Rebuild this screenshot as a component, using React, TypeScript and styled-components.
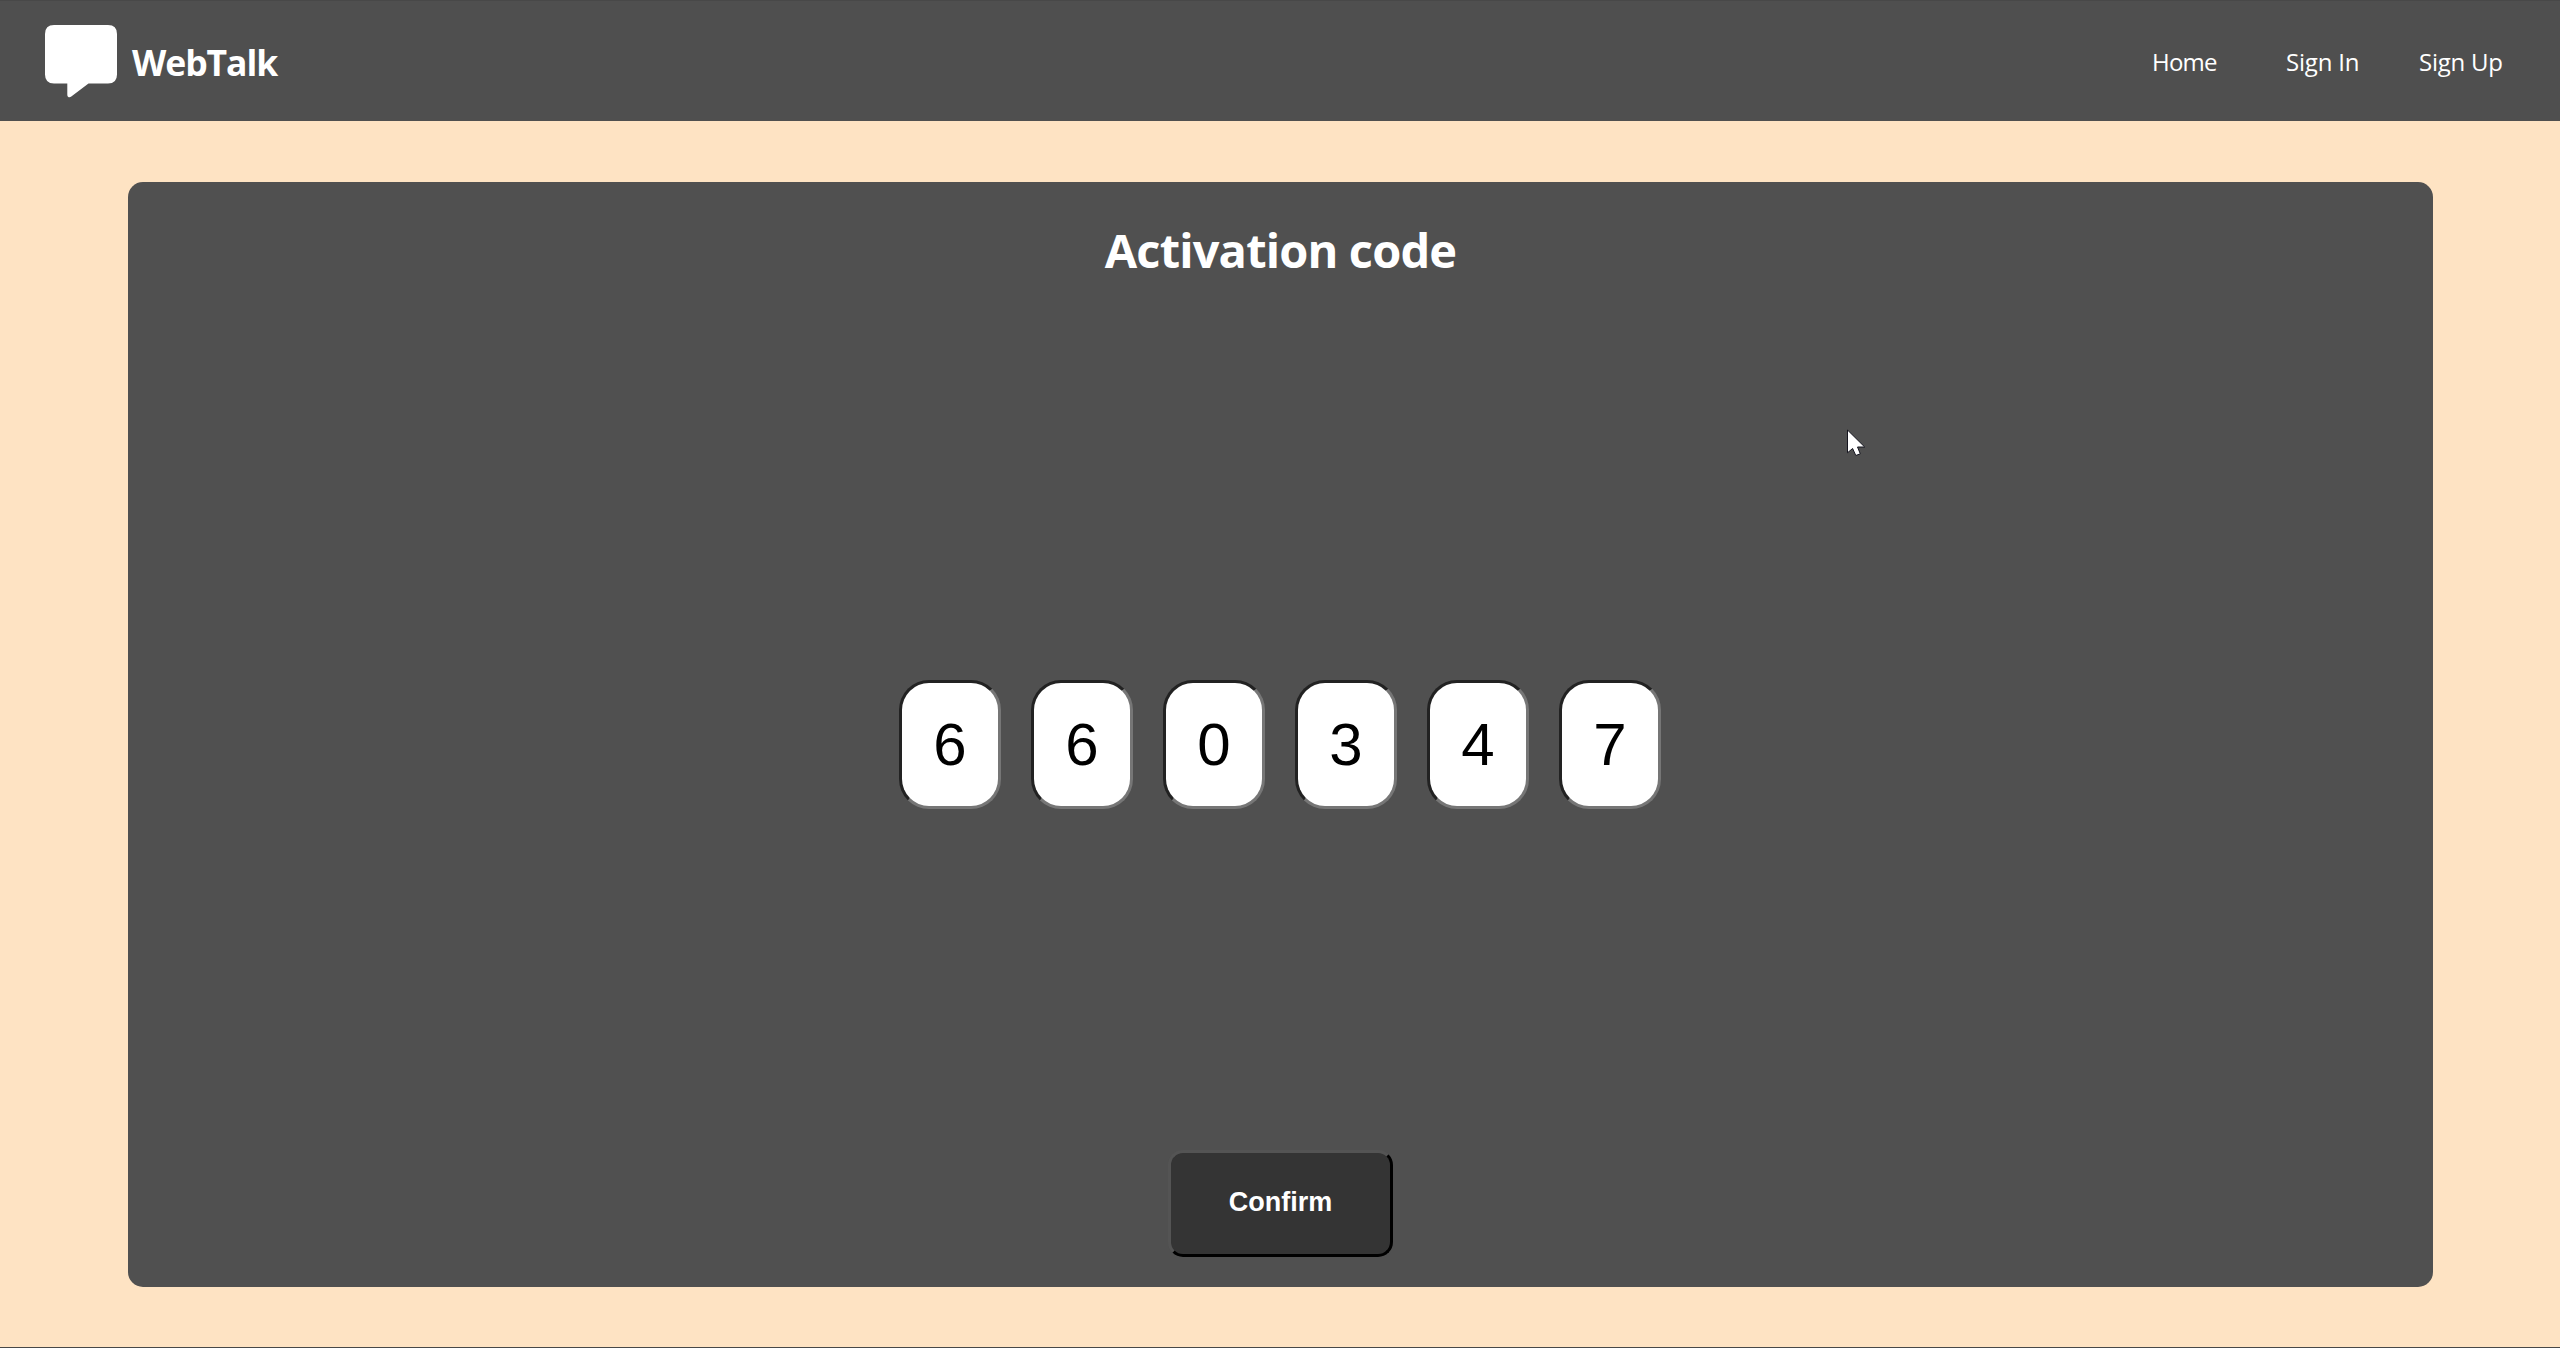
import React, { useState } from "react";
import styled, { createGlobalStyle } from "styled-components";

const GlobalStyle = createGlobalStyle`
  * { box-sizing: border-box; }
  body {
    margin: 0;
    background: #fee3c3;
    font-family: "Open Sans", "Noto Sans", sans-serif;
    color: #fff;
  }
`;

const Page = styled.div`
  position: relative;
  display: flex;
  flex-direction: column;
  height: 1348px;
  overflow: hidden;
  border-bottom: 1px solid #484848;
`;

const Header = styled.header`
  display: flex;
  align-items: center;
  justify-content: space-between;
  flex: none;
  height: 121px;
  padding: 0 57px 0 45px;
  background: #4f4f4f;
  border-top: 1px solid #484848;
`;

const Brand = styled.a`
  display: flex;
  align-items: center;
  gap: 15px;
`;

const Logo = styled.svg`
  width: 72px;
  height: 73px;
`;

const BrandName = styled.span`
  font-size: 35.5px;
  font-weight: 700;
  line-height: 48px;
  letter-spacing: -1.05px;
  padding-top: 1px;
`;

const Nav = styled.nav`
  display: flex;
  padding-top: 1px;
`;

const NavLink = styled.a<{ $width: number; $spacing: number }>`
  width: ${(p) => p.$width}px;
  font-size: 24px;
  line-height: 32px;
  letter-spacing: ${(p) => p.$spacing}px;
  white-space: nowrap;
`;

const Card = styled.main`
  display: flex;
  flex-direction: column;
  align-items: center;
  justify-content: space-between;
  flex: 1;
  margin: 61px 127px 60px 128px;
  padding: 36px 0 30px;
  border-radius: 15px;
  background: #505050;
`;

const Title = styled.h1`
  margin: 0;
  font-size: 47px;
  font-weight: 700;
  line-height: 64px;
  letter-spacing: -0.85px;
`;

const CodeForm = styled.div`
  display: flex;
  gap: 30px;
  margin: 57px 1px 0 0;
`;

const Digit = styled.input`
  width: 102px;
  height: 129px;
  padding: 0;
  border: 3px solid;
  border-color: #222 #767676 #767676 #222;
  border-radius: 30px;
  outline: none;
  background: #fff;
  color: #000;
  font: 60px "Liberation Sans", Arial, sans-serif;
  text-align: center;
`;

const ConfirmButton = styled.button`
  width: 225px;
  height: 107px;
  padding: 0 0 2px;
  border: 3px solid;
  border-color: #545454 #000 #000 #545454;
  border-radius: 15px;
  background: #343434;
  color: #fff;
  font: 700 27px "Liberation Sans", Arial, sans-serif;
`;

const Cursor = styled.svg`
  position: absolute;
  left: 1846px;
  top: 427px;
  width: 22px;
  height: 30px;
  pointer-events: none;
`;

const links = [
  { label: "Home", width: 134, spacing: -0.8 },
  { label: "Sign In", width: 133, spacing: -0.2 },
  { label: "Sign Up", width: 84, spacing: -0.25 },
];

export default function App() {
  const [code, setCode] = useState(["6", "6", "0", "3", "4", "7"]);

  const update = (index: number, value: string) =>
    setCode(code.map((digit, i) => (i === index ? value : digit)));

  return (
    <>
      <GlobalStyle />
      <Page>
        <Header>
          <Brand>
            <Logo viewBox="0 0 72 73" fill="#fff">
              <path d="M9 0H63Q72 0 72 9V49.500Q72 58.500 63 58.500H43.500L26.300 71.500Q24.500 72.800 23 71.700Q22.300 71.200 22.300 69.500V58.500H9Q0 58.500 0 49.500V9Q0 0 9 0Z" />
            </Logo>
            <BrandName>WebTalk</BrandName>
          </Brand>
          <Nav>
            {links.map((link) => (
              <NavLink key={link.label} $width={link.width} $spacing={link.spacing}>
                {link.label}
              </NavLink>
            ))}
          </Nav>
        </Header>
        <Card>
          <Title>Activation code</Title>
          <CodeForm>
            {code.map((digit, i) => (
              <Digit
                key={i}
                value={digit}
                maxLength={1}
                onChange={(e) => update(i, e.target.value)}
              />
            ))}
          </CodeForm>
          <ConfirmButton>Confirm</ConfirmButton>
        </Card>
        <Cursor viewBox="0 0 22 30">
          <path
            d="M1.500 3V25.800L6.600 21.500L9.800 28.500L14.300 26.800L11.500 20H18.700Z"
            fill="#fff"
            stroke="#15151f"
            strokeWidth="1"
          />
        </Cursor>
      </Page>
    </>
  );
}
